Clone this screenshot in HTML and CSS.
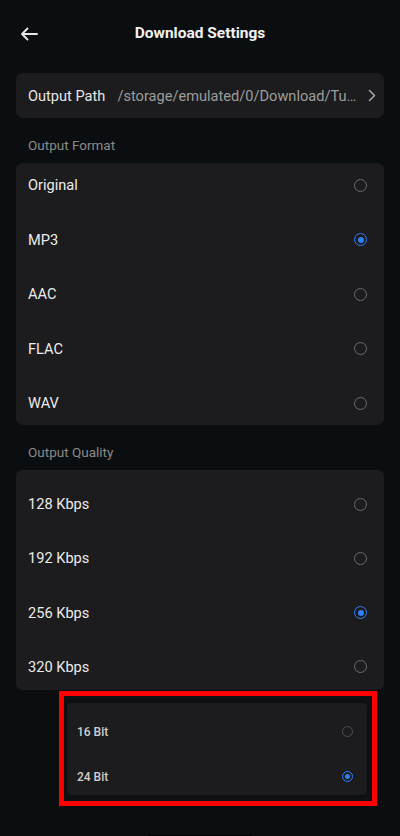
FILE: index.html
```html
<!DOCTYPE html>
<html lang="en">
<head>
<meta charset="utf-8">
<title>Download Settings</title>
<link rel="stylesheet" href="styles.css">
</head>
<body>
<div class="screen">
  <header class="header">
    <svg class="back" width="18" height="14" viewBox="0 0 18 14" aria-hidden="true">
      <path d="M17 7H2M7.5 1.5L2 7l5.5 5.5" fill="none" stroke="#e8e8e8" stroke-width="1.8" stroke-linecap="round" stroke-linejoin="round"/>
    </svg>
    <h1 class="title">Download Settings</h1>
  </header>

  <div class="card path-card">
    <span class="path-label">Output Path</span>
    <span class="path-value">/storage/emulated/0/Download/Tu…</span>
    <svg class="chev" width="8" height="13" viewBox="0 0 8 13" aria-hidden="true">
      <path d="M1.5 1.5L6.5 6.5 1.5 11.5" fill="none" stroke="#a8a8a8" stroke-width="1.5" stroke-linecap="round" stroke-linejoin="round"/>
    </svg>
  </div>

  <div class="section-label">Output Format</div>
  <div class="card list format">
    <div class="row"><span>Original</span><span class="radio"></span></div>
    <div class="row"><span>MP3</span><span class="radio on"></span></div>
    <div class="row"><span>AAC</span><span class="radio"></span></div>
    <div class="row"><span>FLAC</span><span class="radio"></span></div>
    <div class="row"><span>WAV</span><span class="radio"></span></div>
  </div>

  <div class="section-label">Output Quality</div>
  <div class="card list quality">
    <div class="row"><span>128 Kbps</span><span class="radio"></span></div>
    <div class="row"><span>192 Kbps</span><span class="radio"></span></div>
    <div class="row"><span>256 Kbps</span><span class="radio on"></span></div>
    <div class="row"><span>320 Kbps</span><span class="radio"></span></div>
  </div>

  <div class="highlight">
    <div class="popup">
      <div class="prow"><span>16 Bit</span><span class="radio small"></span></div>
      <div class="prow"><span>24 Bit</span><span class="radio small on"></span></div>
    </div>
  </div>

  <div class="home-bar"></div>
</div>
</body>
</html>
```

FILE: styles.css
```css
html, body {
  margin: 0;
  padding: 0;
  background: #0b0e11;
}

body {
  font-family: Roboto, "Noto Sans", "Liberation Sans", sans-serif;
  color: #e6e6e6;
  width: 400px;
  height: 836px;
  overflow: hidden;
}

.screen {
  display: flex;
  flex-direction: column;
  padding: 0 16px;
}

.header {
  height: 66px;
  display: flex;
  align-items: center;
  justify-content: center;
  position: relative;
}

.back {
  position: absolute;
  left: 4px;
  top: 27px;
}

.title {
  margin: 0;
  font-size: 15.5px;
  font-weight: 700;
  color: #f2f2f2;
}

.card {
  background: #1c1c1e;
  border-radius: 7px;
}

.path-card {
  margin-top: 7px;
  height: 45px;
  display: flex;
  align-items: center;
  padding: 0 8px 0 12px;
  font-size: 14.6px;
}

.path-label {
  color: #e6e6e6;
  white-space: nowrap;
}

.path-value {
  flex: 1;
  min-width: 0;
  margin-left: 12px;
  color: #9c9c9c;
  white-space: nowrap;
}

.chev {
  margin-left: 8px;
  flex: none;
}

.section-label {
  margin-top: 18px;
  height: 18px;
  line-height: 18px;
  padding-left: 12px;
  font-size: 13.5px;
  color: #8a8a8a;
}

.list {
  margin-top: 9px;
  display: flex;
  flex-direction: column;
  gap: 10.5px;
}

.quality {
  padding: 12px 0 1px;
  gap: 10.33px;
}

.row {
  height: 44px;
  display: flex;
  align-items: center;
  justify-content: space-between;
  padding: 0 17px 0 12px;
  font-size: 14.6px;
  color: #ebebeb;
}

.radio {
  width: 13px;
  height: 13px;
  box-sizing: border-box;
  border: 1.5px solid #6a6a6a;
  border-radius: 50%;
  display: flex;
  align-items: center;
  justify-content: center;
  flex: none;
}

.radio.on {
  border-color: #2f7ff7;
}

.radio.on::after {
  content: "";
  width: 6px;
  height: 6px;
  border-radius: 50%;
  background: #2f7ff7;
}

.highlight {
  margin: 1px 7px 0 43px;
  border: 5px solid #ff0000;
  padding: 7px 5px 6px 3px;
  background: #101215;
}

.popup {
  background: #1c1c1e;
  border-radius: 4px;
  padding: 18px 0 7px;
  display: flex;
  flex-direction: column;
  gap: 23px;
  box-shadow: 0 0 6px rgba(0, 0, 0, 0.5);
}

.prow {
  height: 22px;
  display: flex;
  align-items: center;
  justify-content: space-between;
  padding: 0 14px 0 10px;
  font-size: 12px;
  font-weight: 500;
  color: #cfcfcf;
}

.radio.small {
  width: 11px;
  height: 11px;
  border-width: 1.3px;
  border-color: #4e4e4e;
}

.radio.small.on {
  border-color: #2f7ff7;
}

.radio.small.on::after {
  width: 5px;
  height: 5px;
}

.home-bar {
  align-self: center;
  margin-top: 29px;
  width: 104px;
  height: 2px;
  background: #030405;
}
```
